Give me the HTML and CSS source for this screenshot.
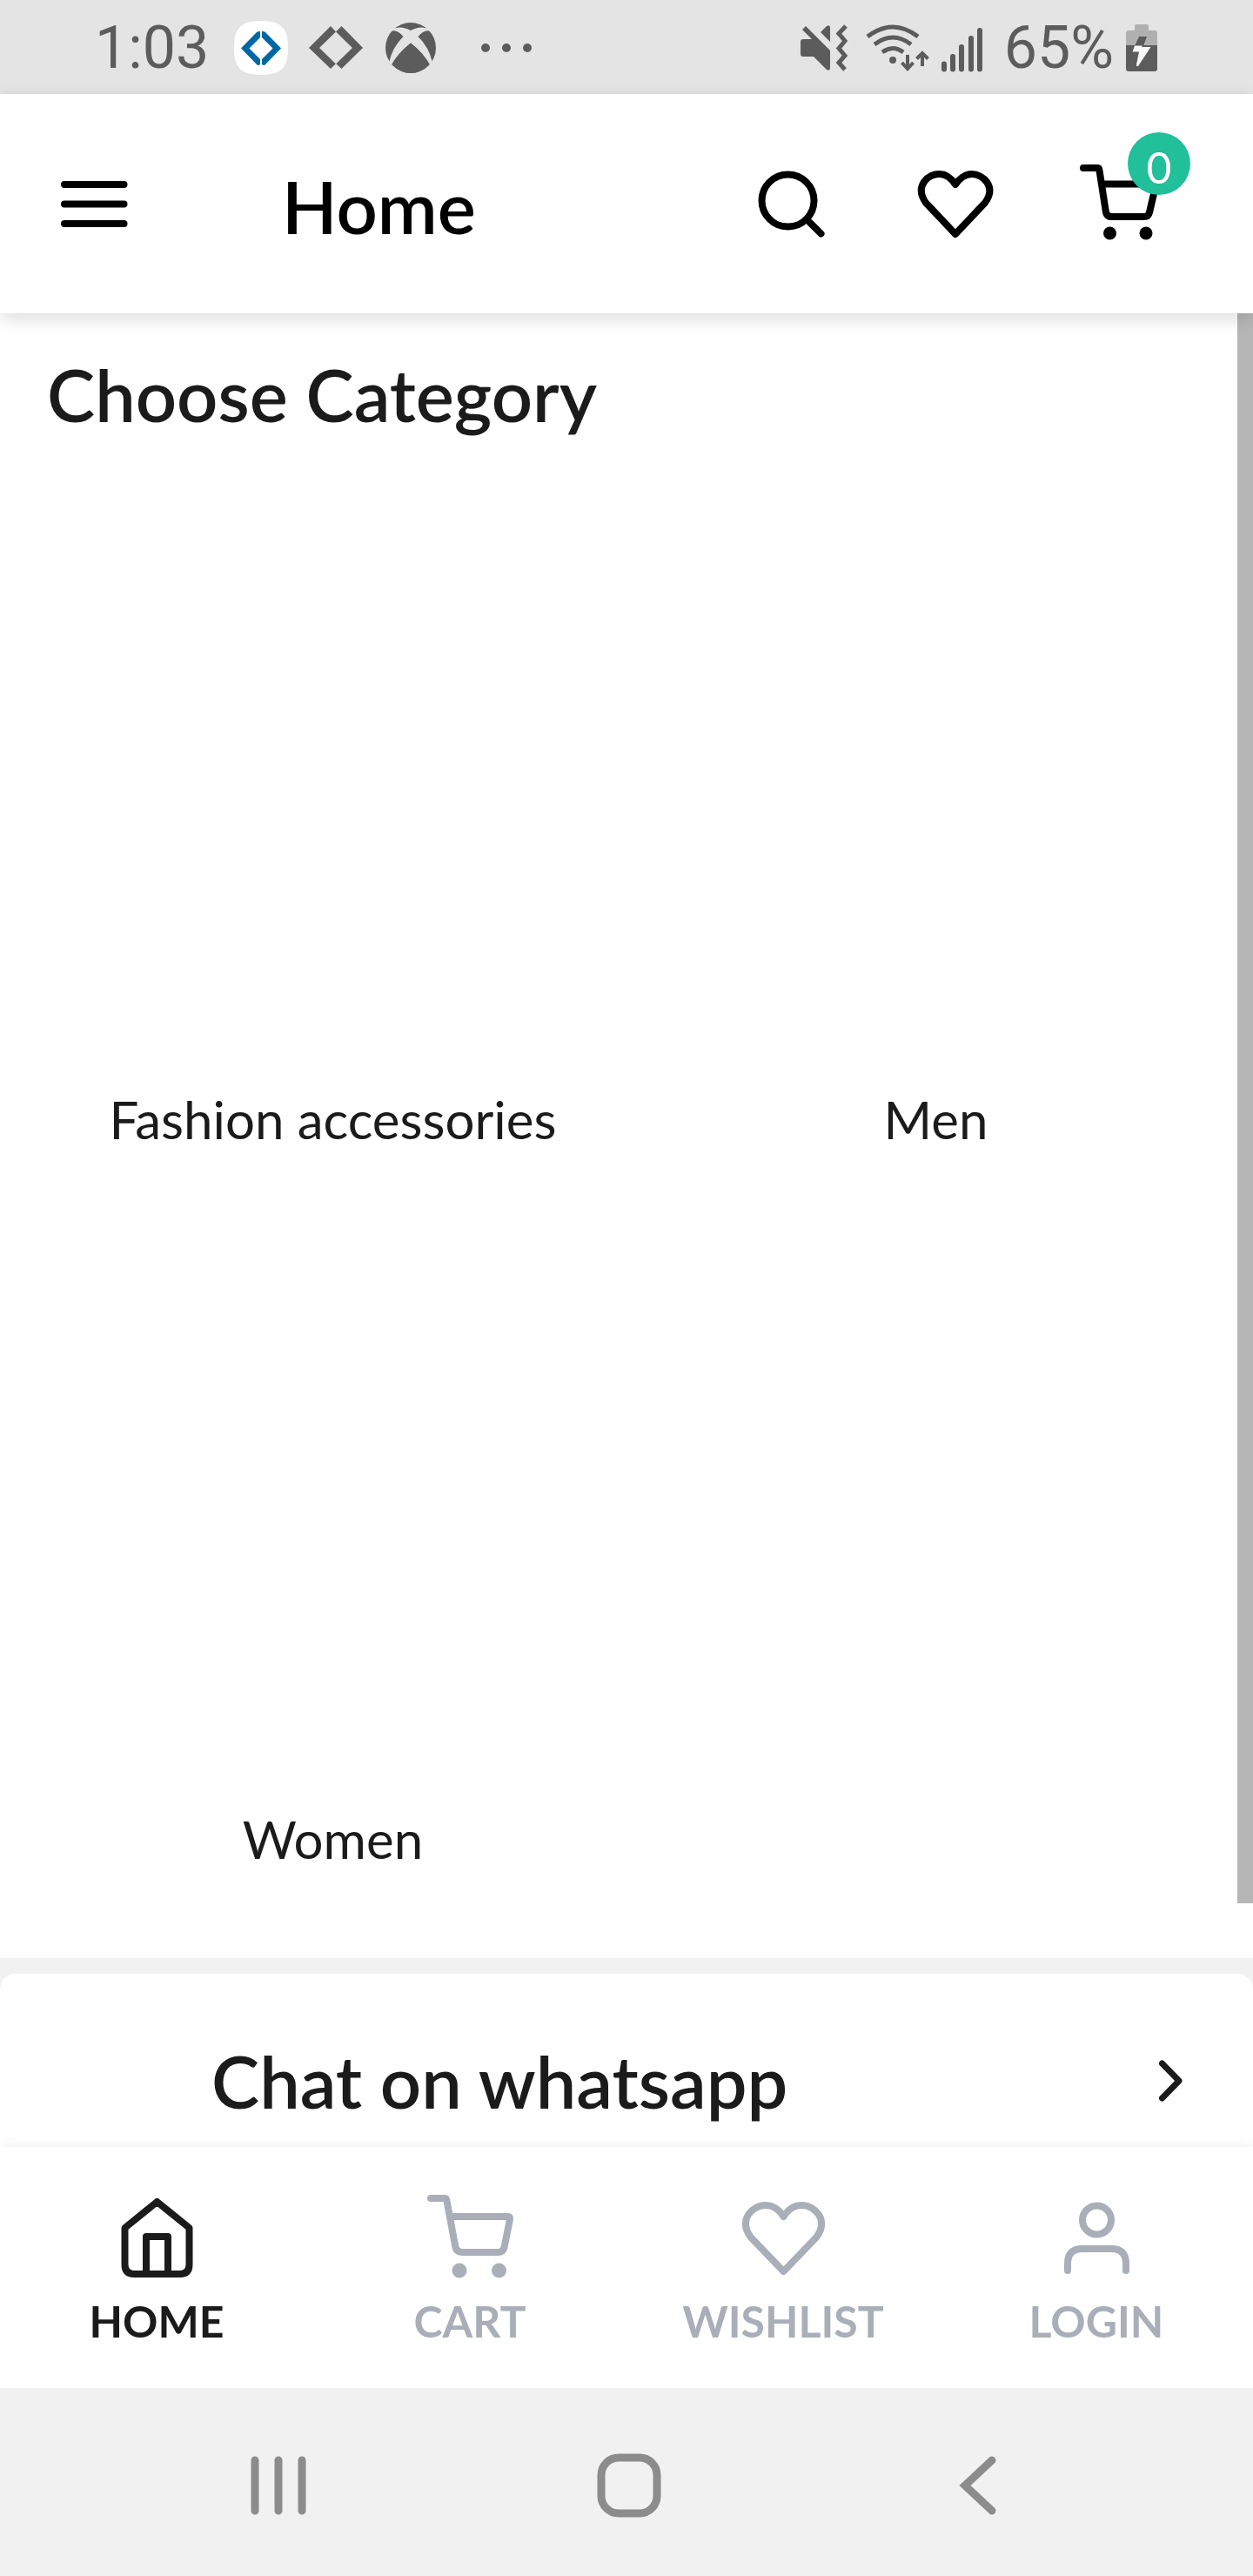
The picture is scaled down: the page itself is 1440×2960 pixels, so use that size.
FILE: index.html
```html
<!DOCTYPE html>
<html lang="en">
<head>
<meta charset="utf-8">
<meta name="viewport" content="width=device-width, initial-scale=1">
<title>Home</title>
<link rel="stylesheet" href="styles.css">
</head>
<body>
<div class="screen">
  <div class="status">
    <div class="status-side">
      <span class="status-text clock">1:03</span>
      <svg class="status-apps" width="344" height="64" viewBox="269 23 344 64" aria-hidden="true">
        <path fill="#fff" d="M301 24C324 24 332 32 332 55S324 86 301 86 270 78 270 55 278 24 301 24z"/>
        <path fill="#0068a5" d="M278 55.500L296 37Q297 36 300 36V43L287.500 55.500 300 68V74Q297 76 296 74zM324 55.500L306 37Q305 36 302 36V43L314.500 55.500 302 68V74Q305 76 306 74z"/>
        <path d="M356 55L381 30 387 36.500 393.500 30 418 55 393.500 79 387 73 381 79zM368 55L387 73.500 406 55 387 36.500z" fill-rule="evenodd"/>
        <circle cx="473" cy="55" r="29"/>
        <path fill="#e4e4e4" d="M453 33Q462 29 473 35Q484 29 493 33L496 36Q489 33 481.500 42Q494 54 498 72L496 76Q489 62 473 49.500Q457 62 450 76L448 72Q452 54 464.500 42Q457 33 450 36z"/>
        <path d="M473 49.500Q489 62 493 75Q484 84 473 84T453 75Q457 62 473 49.500z"/>
        <circle cx="559" cy="55" r="5"/><circle cx="583" cy="55" r="5"/><circle cx="607" cy="55" r="5"/>
      </svg>
    </div>
    <div class="status-side">
      <svg class="status-radio" width="210" height="56" viewBox="921 26 210 56" aria-hidden="true">
        <path d="M924 44H934L923 33 927 29 955 57V77Q955 81 951 79L936 64H924Q921 64 921 61V47Q921 44 924 44zM944 36L951 29Q955 27 955 31V47z"/>
        <path class="line" d="M973 29L965 37.500 972 46 965 54.500 972 63 965 71 972 79" stroke-width="5"/>
        <path class="line" d="M998 41Q1027 19 1056 41M1006 50Q1027 34 1048 50M1015 59Q1027 50 1039 59" stroke-width="5"/>
        <circle cx="1027" cy="68" r="4"/>
        <path class="line" d="M1044 62V78M1037.500 71L1044 78 1050.500 71M1061 75V60M1054.500 66.500L1061 60 1067.500 66.500" stroke-width="4"/>
        <path class="line round" d="M1086 72.500V78.500M1096 64V78.500M1106 53V78.500M1117 43V78.500M1127 34V78.500" stroke-width="6"/>
      </svg>
      <span class="status-text">65%</span>
      <svg class="status-battery" width="36" height="54" viewBox="0 0 36 54" aria-hidden="true">
        <path fill="#b0b0b0" d="M12 0H24Q26 0 26 2V7H33Q36 7 36 10V25H0V10Q0 7 3 7H10V2Q10 0 12 0z"/>
        <path d="M0 24H36V51Q36 54 33 54H3Q0 54 0 51zM15 14H24L20 25H10z"/>
        <path fill="#f8f8f8" d="M10 24.500H18.500V26H28.500L14 48Q12 49 12 46L15 31.500H7.500z"/>
      </svg>
    </div>
  </div>

  <header class="topbar">
    <button class="icon-button" type="button" aria-label="Open menu">
      <svg class="icon" width="96" height="96" viewBox="0 0 96 96"><path d="M14 26H82.500M14 48.500H82.500M14 71H82.500"/></svg>
    </button>
    <h1 class="title">Home</h1>
    <div class="actions">
      <button class="icon-button" type="button" aria-label="Search">
        <svg class="icon" width="96" height="96" viewBox="0 0 96 96"><circle cx="41.500" cy="44.500" r="30"/><path d="M63 66L79.500 82.500"/></svg>
      </button>
      <button class="icon-button" type="button" aria-label="Wishlist">
        <svg class="icon" width="96" height="96" viewBox="0 0 96 96"><path d="M48 83L14 47C0 27 18 13 30 14C38 14 44 20 48 26C52 20 59 14 67 14C79 14 96 28 82 47z"/></svg>
      </button>
      <button class="icon-button" type="button" aria-label="Cart, 0 items">
        <svg class="icon" width="96" height="96" viewBox="0 0 96 96"><path d="M9 7H26Q27 7 27.500 10L35 58Q36 63 42 63H79Q84 63 85 58L92 28Q92 25.500 90 25.500H30"/><circle class="dot" cx="39.500" cy="82" r="7.500"/><circle class="dot" cx="81" cy="82" r="7.500"/></svg>
        <span class="badge">0</span>
      </button>
    </div>
  </header>

  <main class="content">
    <section class="categories">
      <h2 class="heading">Choose Category</h2>
      <div class="grid">
        <a class="category" href="#accessories">Fashion accessories</a>
        <a class="category" href="#men">Men</a>
        <a class="category" href="#women">Women</a>
      </div>
      <div class="scroll-thumb"></div>
    </section>
    <a class="chat" href="#chat">
      <span>Chat on whatsapp</span>
      <svg class="icon" width="27" height="48" viewBox="0 0 27 48" aria-hidden="true"><path d="M3.500 4L23 24 3.500 44"/></svg>
    </a>
  </main>

  <nav class="tabs">
    <a class="tab active" href="#home">
      <svg class="icon" width="108" height="108" viewBox="0 0 108 108" aria-hidden="true"><path d="M54.500 12L91.500 42V84Q91.500 95 81 95H28Q17.500 95 17.500 84V42zM42 95V52H67V95"/></svg>
      HOME
    </a>
    <a class="tab" href="#cart">
      <svg class="icon" width="108" height="108" viewBox="0 0 108 108" aria-hidden="true"><path d="M9 8H26Q27 8 27.500 11L37 62Q38 70 46 70H86Q93 70 94 62L100 32Q100 29 98 29H32"/><circle class="dot" cx="42" cy="91" r="8.500"/><circle class="dot" cx="87.500" cy="91" r="8.500"/></svg>
      CART
    </a>
    <a class="tab" href="#wishlist">
      <svg class="icon" width="108" height="108" viewBox="0 0 108 108" aria-hidden="true"><path d="M54.500 92L17 53C2 33 18 16 34 16C43 16 50 22 54.500 29C59 22 66 16 75 16C91 16 107 33 92 53z"/></svg>
      WISHLIST
    </a>
    <a class="tab" href="#login">
      <svg class="icon" width="108" height="108" viewBox="0 0 108 108" aria-hidden="true"><circle cx="54.500" cy="33" r="16.500"/><path d="M21 91V83Q21 66 38 66H71Q88 66 88 83V91"/></svg>
      LOGIN
    </a>
  </nav>

  <div class="system">
    <button class="system-button" type="button" aria-label="Recent apps">
      <svg width="76" height="76" viewBox="0 0 76 76"><path d="M11 9V67M38 9V67M65 9V67"/></svg>
    </button>
    <button class="system-button" type="button" aria-label="Home screen">
      <svg width="76" height="76" viewBox="0 0 76 76"><rect x="6" y="6" width="64" height="64" rx="20"/></svg>
    </button>
    <button class="system-button" type="button" aria-label="Back">
      <svg width="76" height="76" viewBox="0 0 76 76"><path d="M52 9L21 38 52 67"/></svg>
    </button>
  </div>
</div>
</body>
</html>
```
FILE: styles.css
```css
* {
  box-sizing: border-box;
}

body {
  margin: 0;
  background: #fff;
  color: #1b1b1b;
  font-family: "Lato", "Open Sans", sans-serif;
}

button {
  padding: 0;
  border: 0;
  background: none;
  color: inherit;
  font: inherit;
}

a {
  color: inherit;
  text-decoration: none;
}

svg {
  display: block;
  flex: none;
}

.screen {
  display: flex;
  flex-direction: column;
  min-height: 100vh;
}

.icon {
  fill: none;
  stroke: currentColor;
  stroke-width: 8;
  stroke-linecap: round;
  stroke-linejoin: round;
}

.icon .dot {
  fill: currentColor;
  stroke: none;
}

/* Device status bar */
.status {
  display: flex;
  justify-content: space-between;
  align-items: center;
  height: 108px;
  padding: 2px 110px 0 109px;
  background: #e4e4e4;
  color: #5c5c5c;
  fill: #5c5c5c;
}

.status-side {
  display: flex;
  align-items: center;
}

.status-text {
  font-family: "Roboto", sans-serif;
  font-size: 68px;
  line-height: 80px;
}

.status-apps {
  margin-left: 28px;
}

.status-radio {
  margin-right: 24px;
}

.status-battery {
  margin-left: 14px;
}

.line {
  fill: none;
  stroke: #5c5c5c;
}

.line.round {
  stroke-linecap: round;
}

/* App bar */
.topbar {
  position: relative;
  z-index: 1;
  display: flex;
  align-items: center;
  height: 252px;
  padding: 0 108px 0 60px;
  background: #fff;
  box-shadow: 0 6px 20px rgba(0, 0, 0, 0.14);
  color: #000;
}

.topbar .icon {
  stroke-width: 8;
}

.icon-button {
  position: relative;
}

.title,
.heading {
  margin: 0;
  font-size: 83px;
  font-weight: 600;
  line-height: 96px;
}

.title {
  margin-left: 168px;
  padding-top: 6px;
}

.actions {
  display: flex;
  gap: 90px;
  margin-left: auto;
}

.badge {
  position: absolute;
  top: -34px;
  right: -36px;
  width: 72px;
  height: 72px;
  padding-top: 6px;
  border-radius: 50%;
  background: #21bf9a;
  color: #fff;
  font-size: 50px;
  line-height: 68px;
  text-align: center;
}

/* Categories */
.content {
  flex: 1;
  display: flex;
  flex-direction: column;
  gap: 18px;
  background: #f1f1f1;
}

.categories {
  position: relative;
  padding: 45px 18px 63px 36px;
  background: #fff;
}

.heading {
  padding-left: 18px;
}

.grid {
  display: grid;
  grid-template-columns: 1fr 1fr;
  grid-auto-rows: 827px;
  padding-top: 32px;
}

.category {
  display: flex;
  justify-content: center;
  align-items: flex-end;
  padding-bottom: 38px;
  font-size: 60px;
  line-height: 72px;
}

.scroll-thumb {
  position: absolute;
  top: 0;
  right: 0;
  bottom: 63px;
  width: 18px;
  background: #b6b6b6;
}

.chat {
  flex: 1;
  display: flex;
  justify-content: space-between;
  align-items: center;
  padding: 46px 81px 0 243px;
  border-radius: 18px 18px 0 0;
  background: #fff;
  font-size: 83px;
  font-weight: 600;
  line-height: 96px;
}

.chat .icon {
  stroke-width: 7;
}

/* Bottom navigation */
.tabs {
  position: relative;
  display: grid;
  grid-template-columns: repeat(4, 1fr);
  padding: 51px 0 47px;
  background: #fff;
  box-shadow: 0 -2px 12px rgba(0, 0, 0, 0.06);
}

.tab {
  display: flex;
  flex-direction: column;
  align-items: center;
  gap: 11px;
  color: #a9aeb8;
  font-size: 50px;
  font-weight: 700;
  line-height: 60px;
}

.tab.active {
  color: #1b1b1b;
}

/* Device navigation keys */
.system {
  position: relative;
  display: flex;
  justify-content: space-between;
  align-items: center;
  height: 216px;
  padding: 7px 276px 0 282px;
  background: #f1f1f1;
}

.system-button svg {
  fill: none;
  stroke: #8c8c8c;
  stroke-width: 9;
  stroke-linecap: round;
}
```
